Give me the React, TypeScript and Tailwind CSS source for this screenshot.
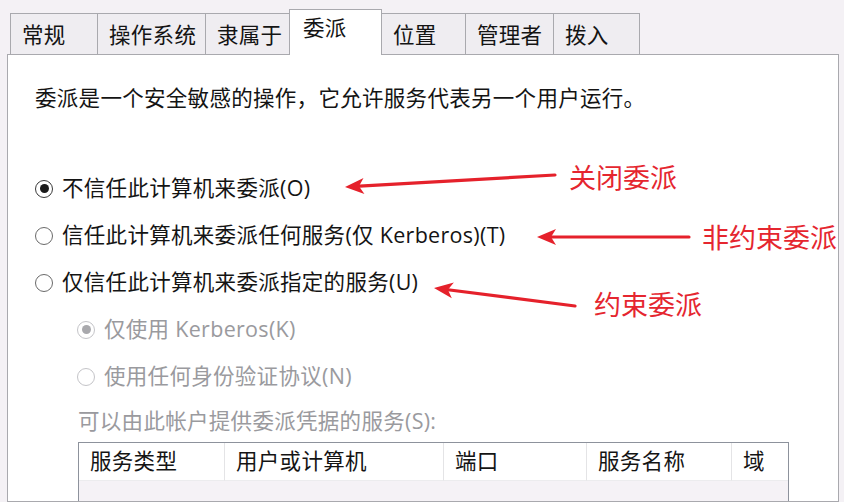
const FONT = "font-['Open_Sans','Noto_Sans_CJK_SC',sans-serif]";

const tabs = [
  { label: "常规", w: "w-[88px]" },
  { label: "操作系统", w: "w-[109px]" },
  { label: "隶属于", w: "w-[85px]" },
  { label: "委派", w: "w-[93px]", active: true },
  { label: "位置", w: "w-[85px]" },
  { label: "管理者", w: "w-[89px]" },
  { label: "拨入", w: "w-[87px]" },
];

function Radio({ checked, disabled }: { checked?: boolean; disabled?: boolean }) {
  const ring = disabled ? "border-[#c4c4c8]" : checked ? "border-[#3a3a3a]" : "border-[#6a6a6a]";
  const dot = disabled ? "bg-[#a9a9ad]" : "bg-[#1a1a1a]";
  return (
    <span className={`grid h-[18px] w-[18px] shrink-0 place-items-center rounded-full border-[1.5px] bg-white ${ring}`}>
      {checked && <span className={`h-[9px] w-[9px] rounded-full ${dot}`} />}
    </span>
  );
}

function Option({
  label,
  checked,
  disabled,
  indent,
}: {
  label: string;
  checked?: boolean;
  disabled?: boolean;
  indent?: boolean;
}) {
  return (
    <div className={`flex h-[47px] items-center gap-[9px] ${indent ? "pl-[42px]" : ""}`}>
      <Radio checked={checked} disabled={disabled} />
      <span className={disabled ? "text-[#9a9a9e]" : "text-[#141414]"}>{label}</span>
    </div>
  );
}

// red callout arrow, head drawn as a filled triangle at the tip
function Arrow({ x1, y1, x2, y2 }: { x1: number; y1: number; x2: number; y2: number }) {
  const dx = x2 - x1;
  const dy = y2 - y1;
  const len = Math.hypot(dx, dy);
  const ux = dx / len;
  const uy = dy / len;
  const hl = 19;
  const hw = 8;
  const bx = x2 - ux * hl;
  const by = y2 - uy * hl;
  const pts = [
    [x2, y2],
    [bx - uy * hw, by + ux * hw],
    [x2 - ux * (hl - 5), y2 - uy * (hl - 5)],
    [bx + uy * hw, by - ux * hw],
  ]
    .map((p) => p.join(","))
    .join(" ");
  return (
    <g>
      <line x1={x1} y1={y1} x2={x2 - ux * 10} y2={y2 - uy * 10} stroke="#e5212b" strokeWidth={3.2} strokeLinecap="round" />
      <polygon points={pts} fill="#e5212b" />
    </g>
  );
}

const cols = [
  { label: "服务类型", w: "w-[146px]" },
  { label: "用户或计算机", w: "w-[219px]" },
  { label: "端口", w: "w-[143px]" },
  { label: "服务名称", w: "w-[145px]" },
  { label: "域", w: "flex-1" },
];

export default function App() {
  return (
    <div className={`relative flex h-[502px] w-[844px] flex-col overflow-hidden bg-[#f4f1f5] text-[21.5px] tracking-[0.3px] ${FONT}`}>
      {/* tab strip */}
      <div className="flex h-[54px] shrink-0 items-end pl-[10px]">
        {tabs.map((t, i) => (
          <div
            key={t.label}
            className={`${t.w} ${i > 0 ? "-ml-px" : ""} ${
              t.active
                ? "relative z-10 -mb-px h-[46px] bg-white pt-[4px] pl-[13px]"
                : "h-[41px] bg-[#efedf1] pt-[7px] pl-[11px]"
            } border border-b-0 border-[#a9a9ae] leading-[28px] text-[#141414]`}
          >
            {t.label}
          </div>
        ))}
      </div>

      {/* panel */}
      <div className="ml-[7px] mr-[5px] min-h-0 flex-1 overflow-hidden border border-[#a9a9ae] bg-white px-[27px]">
        <p className="mt-[29px] leading-[28px] text-[#141414]">
          委派是一个安全敏感的操作，它允许服务代表另一个用户运行。
        </p>

        <div className="mt-[53px] flex flex-col">
          <Option label="不信任此计算机来委派(O)" checked />
          <Option label="信任此计算机来委派任何服务(仅 Kerberos)(T)" />
          <Option label="仅信任此计算机来委派指定的服务(U)" />
          <Option label="仅使用 Kerberos(K)" checked disabled indent />
          <Option label="使用任何身份验证协议(N)" disabled indent />
        </div>

        <div className="flex h-[42px] items-center pl-[43px] text-[#9a9a9e]">可以由此帐户提供委派凭据的服务(S):</div>

        <div className="ml-[43px] h-[80px] w-[711px] border border-[#8d929c] bg-[#f5f2f6]">
          <div className="flex h-[38px] bg-white">
            {cols.map((c, i) => (
              <div
                key={c.label}
                className={`${c.w} flex items-center pl-[11px] text-[#141414] ${
                  i < cols.length - 1 ? "border-r border-[#e4e4e6]" : ""
                } border-b border-b-[#ececee]`}
              >
                {c.label}
              </div>
            ))}
          </div>
        </div>
      </div>

      {/* annotations */}
      <svg className="pointer-events-none absolute inset-0" width={844} height={502}>
        <Arrow x1={555} y1={175} x2={345} y2={187} />
        <Arrow x1={689} y1={237} x2={537} y2={237} />
        <Arrow x1={575} y1={306} x2={434} y2={288} />
      </svg>
      <span className="absolute left-[569px] top-[161px] text-[27px] leading-[34px] tracking-normal text-[#e5262f]">关闭委派</span>
      <span className="absolute left-[702px] top-[221px] text-[27px] leading-[34px] tracking-normal text-[#e5262f]">非约束委派</span>
      <span className="absolute left-[594px] top-[288px] text-[27px] leading-[34px] tracking-normal text-[#e5262f]">约束委派</span>
    </div>
  );
}
